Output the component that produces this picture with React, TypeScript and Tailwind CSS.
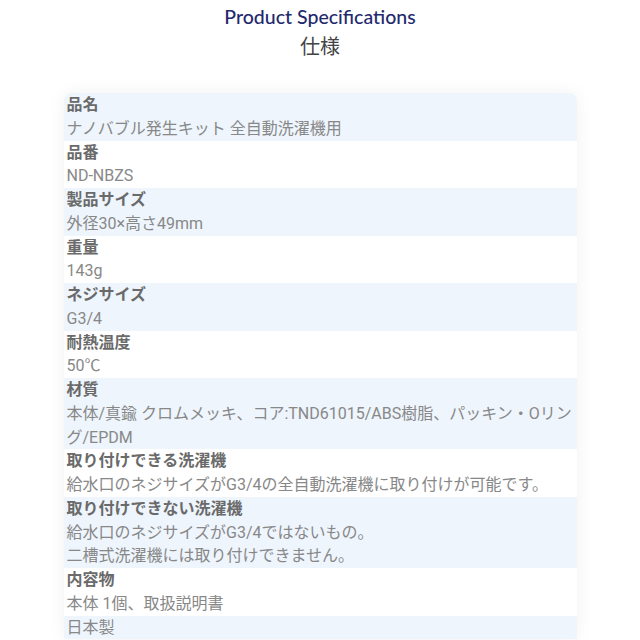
import React from 'react';

interface SpecRow {
  label?: string;
  value: string[];
}

const specs: SpecRow[] = [
  { label: '品名', value: ['ナノバブル発生キット 全自動洗濯機用'] },
  { label: '品番', value: ['ND-NBZS'] },
  { label: '製品サイズ', value: ['外径30×高さ49mm'] },
  { label: '重量', value: ['143g'] },
  { label: 'ネジサイズ', value: ['G3/4'] },
  { label: '耐熱温度', value: ['50℃'] },
  {
    label: '材質',
    value: ['本体/真鍮 クロムメッキ、コア:TND61015/ABS樹脂、パッキン・Oリング/EPDM'],
  },
  {
    label: '取り付けできる洗濯機',
    value: ['給水口のネジサイズがG3/4の全自動洗濯機に取り付けが可能です。'],
  },
  {
    label: '取り付けできない洗濯機',
    value: ['給水口のネジサイズがG3/4ではないもの。', '二槽式洗濯機には取り付けできません。'],
  },
  { label: '内容物', value: ['本体 1個、取扱説明書'] },
  { value: ['日本製'] },
];

export default function App() {
  return (
    <div className="min-h-[640px] bg-white font-['Roboto','Noto_Sans_CJK_JP',sans-serif]">
      <div className="flex flex-col items-center pt-[3px]">
        <h2 className="font-['Lato','Noto_Sans_CJK_JP',sans-serif] text-[19.5px] leading-[28px] font-medium text-[#1f2a6e]">
          Product Specifications
        </h2>
        <p className="mt-[2px] text-[20px] leading-[28px] text-[#444]">仕様</p>
      </div>
      <div className="mx-auto mt-[32px] w-[513px] overflow-hidden rounded-t-lg shadow-[0_0_18px_rgba(0,0,0,0.06)]">
        {specs.map((row, i) => (
          <div
            key={i}
            className={`px-[3px] text-[16px] leading-[23.75px] ${i % 2 === 0 ? 'bg-[#eef5fd]' : 'bg-white'}`}
          >
            {row.label && <div className="font-bold text-[#6a6a6a]">{row.label}</div>}
            {row.value.map((v) => (
              <div key={v} className="text-[#888]">
                {v}
              </div>
            ))}
          </div>
        ))}
      </div>
    </div>
  );
}
